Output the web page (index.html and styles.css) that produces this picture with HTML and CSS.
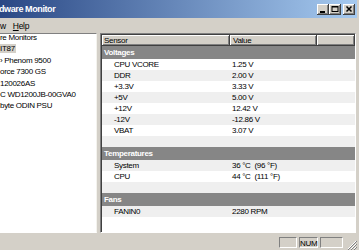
FILE: index.html
```html
<!DOCTYPE html>
<html lang="en">
<head>
    <meta charset="UTF-8">
    <title>Hardware Monitor</title>
    <link rel="stylesheet" href="styles.css">
</head>
<body>
    <div class="window">
        <div class="titlebar">
            <span class="title">dware Monitor</span>
            <div class="caption-btns">
                <div class="cbtn"><svg width="12" height="11" viewBox="0 0 12 11"><rect x="3" y="7" width="5" height="2" fill="#000"/></svg></div>
                <div class="cbtn"><svg width="12" height="11" viewBox="0 0 12 11"><rect x="3" y="2.5" width="6" height="5" fill="none" stroke="#000" stroke-width="1"/><rect x="3" y="2" width="6" height="1.5" fill="#000"/></svg></div>
                <div class="cbtn close"><svg width="12" height="11" viewBox="0 0 12 11"><path d="M3.5 2.5 L8.5 7.5 M8.5 2.5 L3.5 7.5" stroke="#000" stroke-width="1.5"/></svg></div>
            </div>
        </div>
        <div class="menubar">
            <span>w</span>
            <span><u>H</u>elp</span>
        </div>
        <div class="client">
            <div class="tree">
                <div class="node">re Monitors</div>
                <div class="node"><span class="selected">IT87</span></div>
                <div class="node">› Phenom 9500</div>
                <div class="node">orce 7300 GS</div>
                <div class="node">120026AS</div>
                <div class="node">C WD1200JB-00GVA0</div>
                <div class="node">byte ODIN PSU</div>
            </div>
            <div class="splitter"></div>
            <div class="list">
                <div class="list-header">
                    <div class="hcell col-name">Sensor</div>
                    <div class="hcell col-value">Value</div>
                    <div class="hcell col-rest"></div>
                </div>
                <div class="group">Voltages</div>
                <div class="row"><span class="name">CPU VCORE</span><span class="val">1.25 V</span></div>
                <div class="row alt"><span class="name">DDR</span><span class="val">2.00 V</span></div>
                <div class="row"><span class="name">+3.3V</span><span class="val">3.33 V</span></div>
                <div class="row alt"><span class="name">+5V</span><span class="val">5.00 V</span></div>
                <div class="row"><span class="name">+12V</span><span class="val">12.42 V</span></div>
                <div class="row alt"><span class="name">-12V</span><span class="val">-12.86 V</span></div>
                <div class="row"><span class="name">VBAT</span><span class="val">3.07 V</span></div>
                <div class="row alt"></div>
                <div class="group">Temperatures</div>
                <div class="row alt"><span class="name">System</span><span class="val">36 °C&nbsp; (96 °F)</span></div>
                <div class="row"><span class="name">CPU</span><span class="val">44 °C&nbsp; (111 °F)</span></div>
                <div class="row alt"></div>
                <div class="group">Fans</div>
                <div class="row alt"><span class="name">FANIN0</span><span class="val">2280 RPM</span></div>
            </div>
        </div>
        <div class="statusbar">
            <div class="panel p1"></div>
            <div class="panel p2">NUM</div>
            <div class="panel p3"></div>
            <div class="grip">
                <svg width="10" height="10" viewBox="0 0 10 10">
                    <path d="M9 1 L1 9 M9 4 L4 9 M9 7 L7 9" stroke="#fff" stroke-width="1"/>
                    <path d="M10 1 L1 10 M10 4 L4 10 M10 7 L7 10" stroke="#808080" stroke-width="1"/>
                </svg>
            </div>
        </div>
    </div>
</body>
</html>
```

FILE: styles.css
```css
body {
    margin: 0;
    font-family: "Liberation Sans", Arial, sans-serif;
    font-size: 8px;
    letter-spacing: -0.3px;
    background: #d4d0c8;
}
.window {
    width: 359px;
    height: 250px;
    display: flex;
    flex-direction: column;
    background: #d4d0c8;
    overflow: hidden;
}
.titlebar {
    height: 18px;
    margin-right: 2px;
    padding-right: 2px;
    background: linear-gradient(to right, #2a4885, #a6caf0);
    display: flex;
    align-items: center;
    justify-content: space-between;
}
.title {
    color: #fff;
    font-weight: bold;
    font-size: 9px;
    letter-spacing: -0.4px;
    margin-left: -1px;
}
.caption-btns {
    display: flex;
}
.cbtn {
    width: 12px;
    height: 11px;
    background: #d4d0c8;
    box-shadow: inset -1px -1px #404040, inset 1px 1px #fff, inset -2px -2px #808080;
}
.cbtn svg {
    display: block;
}
.cbtn.close {
    margin-left: 2px;
}
.menubar {
    height: 15px;
    display: flex;
    align-items: center;
    gap: 7px;
    font-size: 8.5px;
    color: #000;
}
.client {
    height: 200px;
    display: flex;
}
.tree {
    width: 96px;
    background: #fff;
    border-top: 1px solid #808080;
    border-right: 1px solid #f4f3ee;
    border-bottom: 1px solid #fff;
    overflow: hidden;
}
.node {
    height: 11.4px;
    line-height: 11.4px;
    white-space: nowrap;
    color: #000;
}
.node:first-child {
    margin-top: -2px;
}
.selected {
    background: #d4d0c8;
    padding-right: 1px;
}
.splitter {
    width: 3px;
}
.list {
    width: 253px;
    background: #fff;
    border: 1px solid;
    border-color: #808080 #fff #fff #808080;
    box-shadow: inset 1px 1px #404040;
    padding: 1px 0 0 1px;
    overflow: hidden;
}
.list-header {
    display: flex;
    height: 11px;
}
.hcell {
    height: 11px;
    line-height: 11px;
    padding-left: 2px;
    box-sizing: border-box;
    background: #d4d0c8;
    box-shadow: inset -1px -1px #404040, inset 1px 1px #fff, inset -2px -2px #808080;
}
.col-name {
    width: 128px;
}
.col-value {
    width: 87px;
    padding-left: 3px;
}
.col-rest {
    flex: 1;
}
.group {
    height: 13px;
    line-height: 13px;
    background: #868686;
    color: #fff;
    font-weight: bold;
    padding-left: 2px;
}
.row {
    display: flex;
    height: 11px;
    line-height: 11px;
}
.row.alt {
    background: #efefef;
}
.name {
    width: 128px;
    padding-left: 12px;
    box-sizing: border-box;
}
.val {
    padding-left: 2px;
}
.statusbar {
    height: 15px;
    margin-top: 2px;
    display: flex;
    justify-content: flex-end;
    align-items: center;
    gap: 2px;
    padding-right: 2px;
}
.panel {
    height: 11px;
    line-height: 11px;
    box-sizing: border-box;
    border: 1px solid;
    border-color: #808080 #fff #fff #808080;
    text-align: center;
}
.p1 {
    width: 18px;
}
.p2 {
    width: 19px;
}
.p3 {
    width: 23px;
}
.grip {
    width: 10px;
    height: 10px;
    margin-left: 2px;
    align-self: flex-end;
}
.grip svg {
    display: block;
}
```
